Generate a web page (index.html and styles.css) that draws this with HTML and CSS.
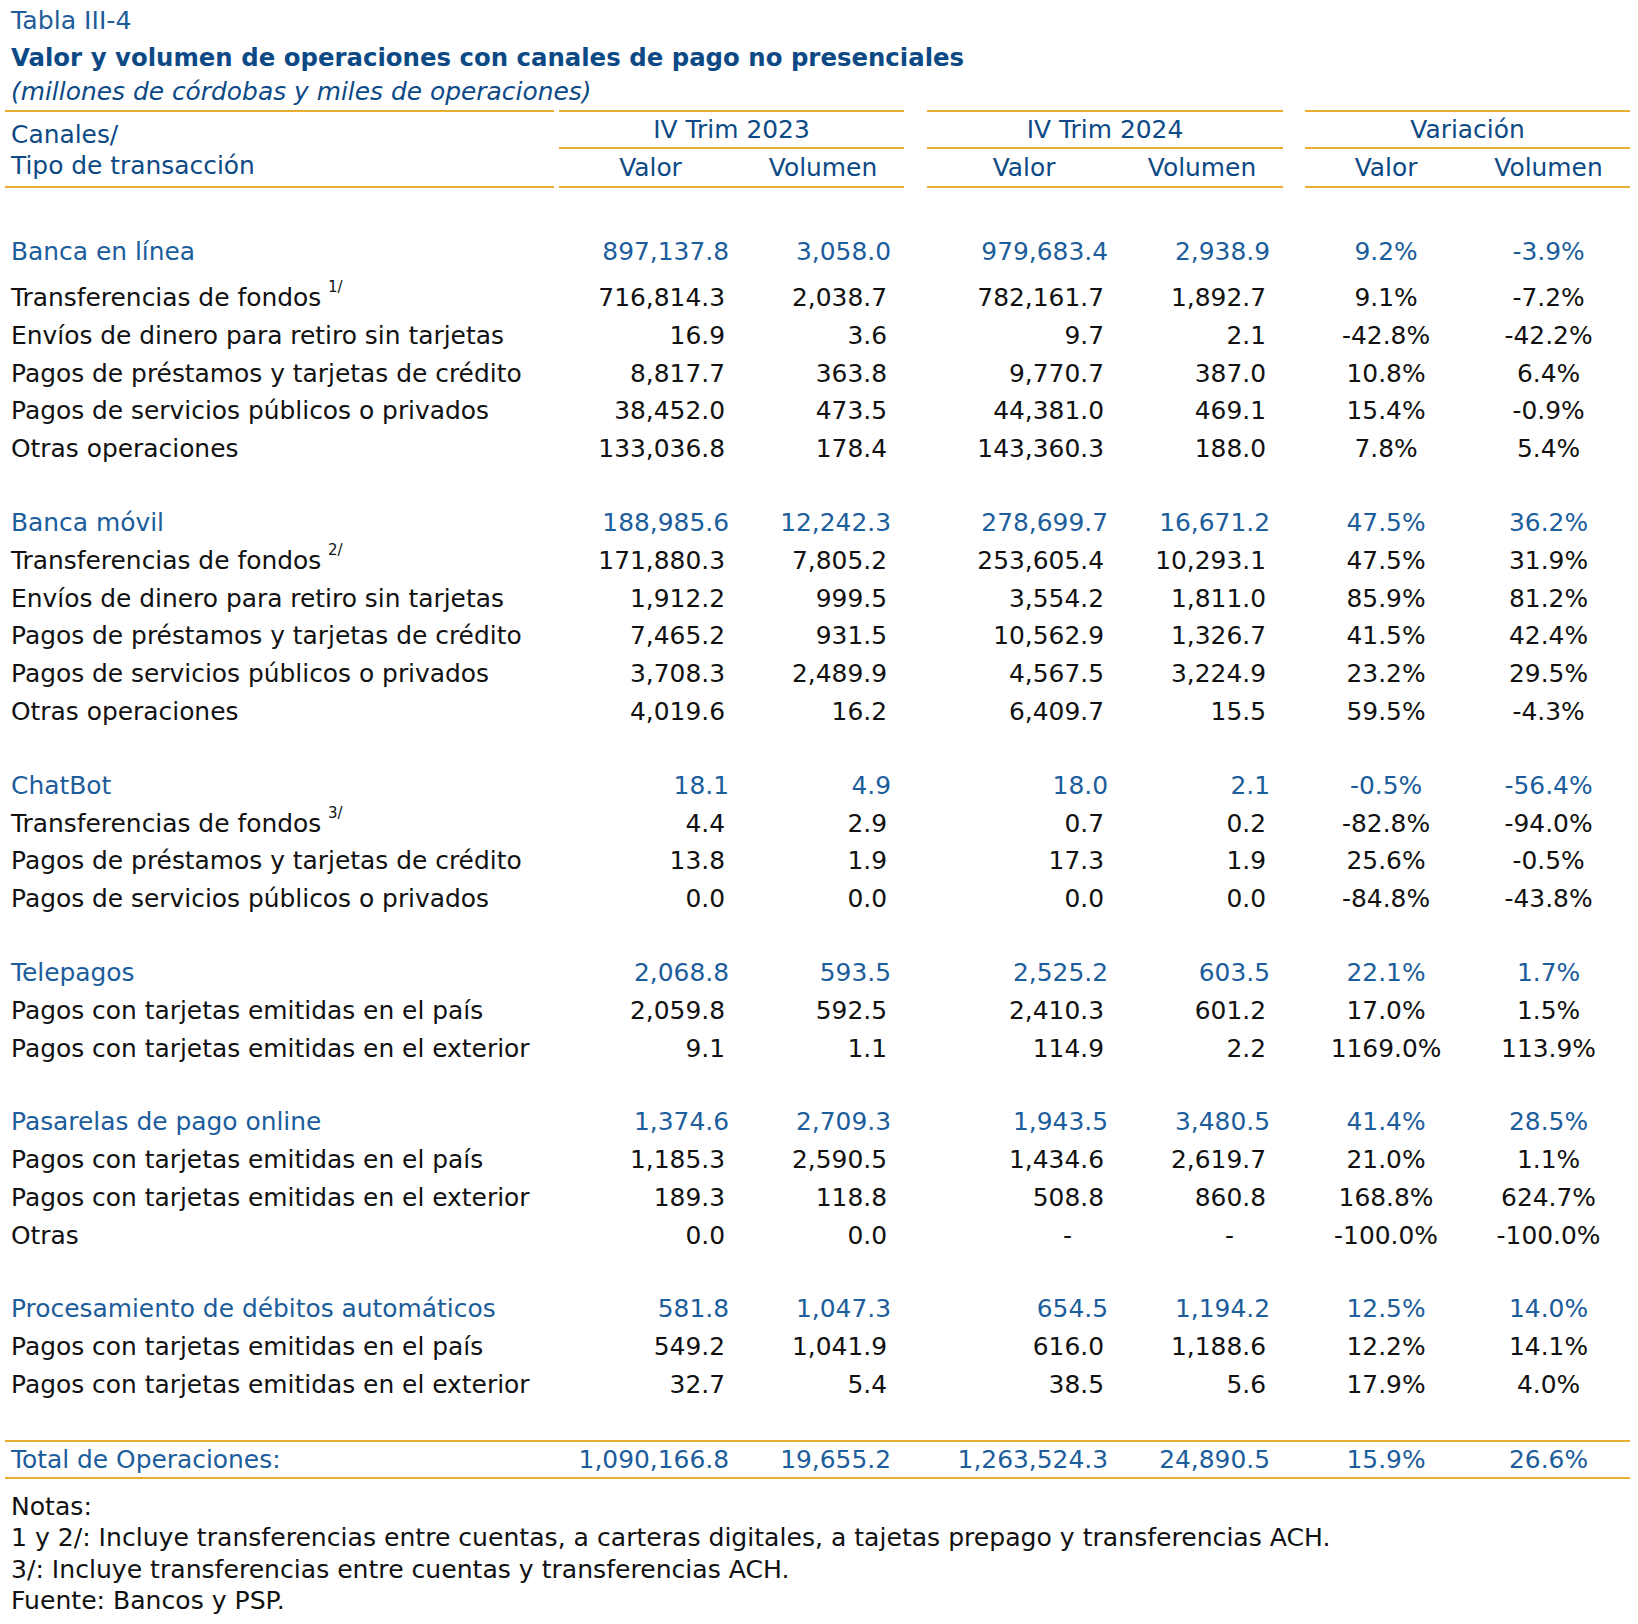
FILE: index.html
```html
<!DOCTYPE html>
<html lang="es">
<head>
<meta charset="utf-8">
<title>Tabla III-4</title>
<link rel="stylesheet" href="styles.css">
</head>
<body>
<div class="page">
  <div class="caption">Tabla III-4</div>
  <div class="title">Valor y volumen de operaciones con canales de pago no presenciales</div>
  <div class="subtitle">(millones de córdobas y miles de operaciones)</div>

  <table class="data">
    <colgroup>
      <col class="c-label"><col class="c-gap1"><col class="c-v1"><col class="c-vol1"><col class="c-gap2"><col class="c-v2"><col class="c-vol2"><col class="c-gap3"><col class="c-var1"><col class="c-var2">
    </colgroup>
    <thead>
      <tr class="hd-a">
        <th class="hd-label" rowspan="2">Canales/<br>Tipo de transacción</th>
        <th class="gap"></th>
        <th class="grp" colspan="2">IV Trim 2023</th>
        <th class="gap"></th>
        <th class="grp" colspan="2">IV Trim 2024</th>
        <th class="gap"></th>
        <th class="grp" colspan="2">Variación</th>
      </tr>
      <tr class="hd-b">
        <th class="gap"></th>
        <th class="sub">Valor</th><th class="sub">Volumen</th>
        <th class="gap"></th>
        <th class="sub">Valor</th><th class="sub">Volumen</th>
        <th class="gap"></th>
        <th class="sub">Valor</th><th class="sub">Volumen</th>
      </tr>
    </thead>
    <tbody>
      <tr class="spacer-first"><td colspan="10"></td></tr>

      <tr class="sec first"><td class="lbl">Banca en línea</td><td></td><td class="num">897,137.8</td><td class="num">3,058.0</td><td></td><td class="num">979,683.4</td><td class="num">2,938.9</td><td></td><td class="pct">9.2%</td><td class="pct">-3.9%</td></tr>
      <tr class="item"><td class="lbl">Transferencias de fondos <sup>1/</sup></td><td></td><td class="num">716,814.3</td><td class="num">2,038.7</td><td></td><td class="num">782,161.7</td><td class="num">1,892.7</td><td></td><td class="pct">9.1%</td><td class="pct">-7.2%</td></tr>
      <tr class="item"><td class="lbl">Envíos de dinero para retiro sin tarjetas</td><td></td><td class="num">16.9</td><td class="num">3.6</td><td></td><td class="num">9.7</td><td class="num">2.1</td><td></td><td class="pct">-42.8%</td><td class="pct">-42.2%</td></tr>
      <tr class="item"><td class="lbl">Pagos de préstamos y tarjetas de crédito</td><td></td><td class="num">8,817.7</td><td class="num">363.8</td><td></td><td class="num">9,770.7</td><td class="num">387.0</td><td></td><td class="pct">10.8%</td><td class="pct">6.4%</td></tr>
      <tr class="item"><td class="lbl">Pagos de servicios públicos o privados</td><td></td><td class="num">38,452.0</td><td class="num">473.5</td><td></td><td class="num">44,381.0</td><td class="num">469.1</td><td></td><td class="pct">15.4%</td><td class="pct">-0.9%</td></tr>
      <tr class="item"><td class="lbl">Otras operaciones</td><td></td><td class="num">133,036.8</td><td class="num">178.4</td><td></td><td class="num">143,360.3</td><td class="num">188.0</td><td></td><td class="pct">7.8%</td><td class="pct">5.4%</td></tr>

      <tr class="spacer"><td colspan="10"></td></tr>

      <tr class="sec"><td class="lbl">Banca móvil</td><td></td><td class="num">188,985.6</td><td class="num">12,242.3</td><td></td><td class="num">278,699.7</td><td class="num">16,671.2</td><td></td><td class="pct">47.5%</td><td class="pct">36.2%</td></tr>
      <tr class="item"><td class="lbl">Transferencias de fondos <sup>2/</sup></td><td></td><td class="num">171,880.3</td><td class="num">7,805.2</td><td></td><td class="num">253,605.4</td><td class="num">10,293.1</td><td></td><td class="pct">47.5%</td><td class="pct">31.9%</td></tr>
      <tr class="item"><td class="lbl">Envíos de dinero para retiro sin tarjetas</td><td></td><td class="num">1,912.2</td><td class="num">999.5</td><td></td><td class="num">3,554.2</td><td class="num">1,811.0</td><td></td><td class="pct">85.9%</td><td class="pct">81.2%</td></tr>
      <tr class="item"><td class="lbl">Pagos de préstamos y tarjetas de crédito</td><td></td><td class="num">7,465.2</td><td class="num">931.5</td><td></td><td class="num">10,562.9</td><td class="num">1,326.7</td><td></td><td class="pct">41.5%</td><td class="pct">42.4%</td></tr>
      <tr class="item"><td class="lbl">Pagos de servicios públicos o privados</td><td></td><td class="num">3,708.3</td><td class="num">2,489.9</td><td></td><td class="num">4,567.5</td><td class="num">3,224.9</td><td></td><td class="pct">23.2%</td><td class="pct">29.5%</td></tr>
      <tr class="item"><td class="lbl">Otras operaciones</td><td></td><td class="num">4,019.6</td><td class="num">16.2</td><td></td><td class="num">6,409.7</td><td class="num">15.5</td><td></td><td class="pct">59.5%</td><td class="pct">-4.3%</td></tr>

      <tr class="spacer"><td colspan="10"></td></tr>

      <tr class="sec"><td class="lbl">ChatBot</td><td></td><td class="num">18.1</td><td class="num">4.9</td><td></td><td class="num">18.0</td><td class="num">2.1</td><td></td><td class="pct">-0.5%</td><td class="pct">-56.4%</td></tr>
      <tr class="item"><td class="lbl">Transferencias de fondos <sup>3/</sup></td><td></td><td class="num">4.4</td><td class="num">2.9</td><td></td><td class="num">0.7</td><td class="num">0.2</td><td></td><td class="pct">-82.8%</td><td class="pct">-94.0%</td></tr>
      <tr class="item"><td class="lbl">Pagos de préstamos y tarjetas de crédito</td><td></td><td class="num">13.8</td><td class="num">1.9</td><td></td><td class="num">17.3</td><td class="num">1.9</td><td></td><td class="pct">25.6%</td><td class="pct">-0.5%</td></tr>
      <tr class="item"><td class="lbl">Pagos de servicios públicos o privados</td><td></td><td class="num">0.0</td><td class="num">0.0</td><td></td><td class="num">0.0</td><td class="num">0.0</td><td></td><td class="pct">-84.8%</td><td class="pct">-43.8%</td></tr>

      <tr class="spacer"><td colspan="10"></td></tr>

      <tr class="sec"><td class="lbl">Telepagos</td><td></td><td class="num">2,068.8</td><td class="num">593.5</td><td></td><td class="num">2,525.2</td><td class="num">603.5</td><td></td><td class="pct">22.1%</td><td class="pct">1.7%</td></tr>
      <tr class="item"><td class="lbl">Pagos con tarjetas emitidas en el país</td><td></td><td class="num">2,059.8</td><td class="num">592.5</td><td></td><td class="num">2,410.3</td><td class="num">601.2</td><td></td><td class="pct">17.0%</td><td class="pct">1.5%</td></tr>
      <tr class="item"><td class="lbl">Pagos con tarjetas emitidas en el exterior</td><td></td><td class="num">9.1</td><td class="num">1.1</td><td></td><td class="num">114.9</td><td class="num">2.2</td><td></td><td class="pct">1169.0%</td><td class="pct">113.9%</td></tr>

      <tr class="spacer"><td colspan="10"></td></tr>

      <tr class="sec"><td class="lbl">Pasarelas de pago online</td><td></td><td class="num">1,374.6</td><td class="num">2,709.3</td><td></td><td class="num">1,943.5</td><td class="num">3,480.5</td><td></td><td class="pct">41.4%</td><td class="pct">28.5%</td></tr>
      <tr class="item"><td class="lbl">Pagos con tarjetas emitidas en el país</td><td></td><td class="num">1,185.3</td><td class="num">2,590.5</td><td></td><td class="num">1,434.6</td><td class="num">2,619.7</td><td></td><td class="pct">21.0%</td><td class="pct">1.1%</td></tr>
      <tr class="item"><td class="lbl">Pagos con tarjetas emitidas en el exterior</td><td></td><td class="num">189.3</td><td class="num">118.8</td><td></td><td class="num">508.8</td><td class="num">860.8</td><td></td><td class="pct">168.8%</td><td class="pct">624.7%</td></tr>
      <tr class="item"><td class="lbl">Otras</td><td></td><td class="num">0.0</td><td class="num">0.0</td><td></td><td class="num dash">-</td><td class="num dash">-</td><td></td><td class="pct">-100.0%</td><td class="pct">-100.0%</td></tr>

      <tr class="spacer"><td colspan="10"></td></tr>

      <tr class="sec"><td class="lbl">Procesamiento de débitos automáticos</td><td></td><td class="num">581.8</td><td class="num">1,047.3</td><td></td><td class="num">654.5</td><td class="num">1,194.2</td><td></td><td class="pct">12.5%</td><td class="pct">14.0%</td></tr>
      <tr class="item"><td class="lbl">Pagos con tarjetas emitidas en el país</td><td></td><td class="num">549.2</td><td class="num">1,041.9</td><td></td><td class="num">616.0</td><td class="num">1,188.6</td><td></td><td class="pct">12.2%</td><td class="pct">14.1%</td></tr>
      <tr class="item"><td class="lbl">Pagos con tarjetas emitidas en el exterior</td><td></td><td class="num">32.7</td><td class="num">5.4</td><td></td><td class="num">38.5</td><td class="num">5.6</td><td></td><td class="pct">17.9%</td><td class="pct">4.0%</td></tr>

      <tr class="spacer-last"><td colspan="10"></td></tr>
    </tbody>
    <tfoot>
      <tr class="total"><td class="lbl">Total de Operaciones:</td><td></td><td class="num">1,090,166.8</td><td class="num">19,655.2</td><td></td><td class="num">1,263,524.3</td><td class="num">24,890.5</td><td></td><td class="pct">15.9%</td><td class="pct">26.6%</td></tr>
    </tfoot>
  </table>

  <div class="notes">
    <p>Notas:</p>
    <p>1 y 2/: Incluye transferencias entre cuentas, a carteras digitales, a tajetas prepago y transferencias ACH.</p>
    <p>3/: Incluye transferencias entre cuentas y transferencias ACH.</p>
    <p>Fuente: Bancos y PSP.</p>
  </div>
</div>
</body>
</html>
```

FILE: styles.css
```css
html, body {
  margin: 0;
  padding: 0;
  background: #ffffff;
}

body {
  font-family: "DejaVu Sans", Verdana, sans-serif;
  font-size: 24.9px;
  color: #111111;
}

.page {
  width: 1625px;
  padding: 1px 0 0 5px;
}

.caption {
  color: #1f5c99;
  line-height: 34px;
  padding: 3px 0 0 6px;
  font-size: 25.2px;
}

.title {
  color: #0d4a85;
  font-weight: bold;
  font-size: 24.4px;
  line-height: 37px;
  margin-top: 1px;
  padding-left: 6px;
}

.subtitle {
  color: #0d4a85;
  font-style: italic;
  line-height: 32px;
  padding-left: 6px;
}

.data {
  margin-top: 2px;
  width: 1625px;
  table-layout: fixed;
  border-collapse: separate;
  border-spacing: 0;
}

.c-label { width: 549px; }
.c-gap1 { width: 5px; }
.c-v1 { width: 183px; }
.c-vol1 { width: 162px; }
.c-gap2 { width: 23px; }
.c-v2 { width: 194px; }
.c-vol2 { width: 162px; }
.c-gap3 { width: 22px; }
.c-var1 { width: 162px; }
.c-var2 { width: 163px; }

.data th,
.data td {
  padding: 0;
  font-weight: normal;
  white-space: nowrap;
}

/* header */
.data thead th {
  color: #0d4a85;
}

.hd-label {
  text-align: left;
  padding-left: 6px !important;
  padding-top: 2px !important;
  line-height: 31px;
  border-top: 2px solid #e8ae2f;
  border-bottom: 2px solid #e8ae2f;
  vertical-align: middle;
}

.hd-a .grp {
  text-align: center;
  line-height: 34px;
  padding-top: 1px !important;
  border-top: 2px solid #e8ae2f;
  border-bottom: 2px solid #e8ae2f;
}

.hd-b .sub {
  text-align: center;
  line-height: 36px;
  padding-top: 1px !important;
  border-bottom: 2px solid #e8ae2f;
}

/* body rows */
.spacer-first td { height: 45px; }
.spacer td { height: 35.5px; }
.spacer-last td { height: 36.3px; }

.sec td,
.item td {
  line-height: 37.9px;
  vertical-align: top;
}

.sec.first td {
  height: 45.7px;
}

.sec td { color: #1c5d9c; }
.item td { color: #111111; }

.lbl {
  text-align: left;
  padding-left: 6px !important;
}

.num {
  text-align: right;
  padding-right: 17px !important;
}

.sec .num,
.total .num {
  padding-right: 13px !important;
}

.num.dash {
  padding-right: 49px !important;
}

.pct {
  text-align: center;
}

.lbl sup {
  font-size: 15px;
  line-height: 1;
  vertical-align: top;
  position: relative;
  top: 1px;
  margin-left: -1px;
}

/* total */
.total td {
  color: #1c5d9c;
  line-height: 34px;
  padding-top: 1px !important;
  border-top: 2px solid #e8ae2f;
  border-bottom: 2px solid #e8ae2f;
}

/* notes */
.notes {
  margin-top: 12px;
  padding-left: 6px;
  color: #111111;
  font-size: 25.1px;
}

.notes p {
  margin: 0;
  line-height: 31.3px;
}
```
